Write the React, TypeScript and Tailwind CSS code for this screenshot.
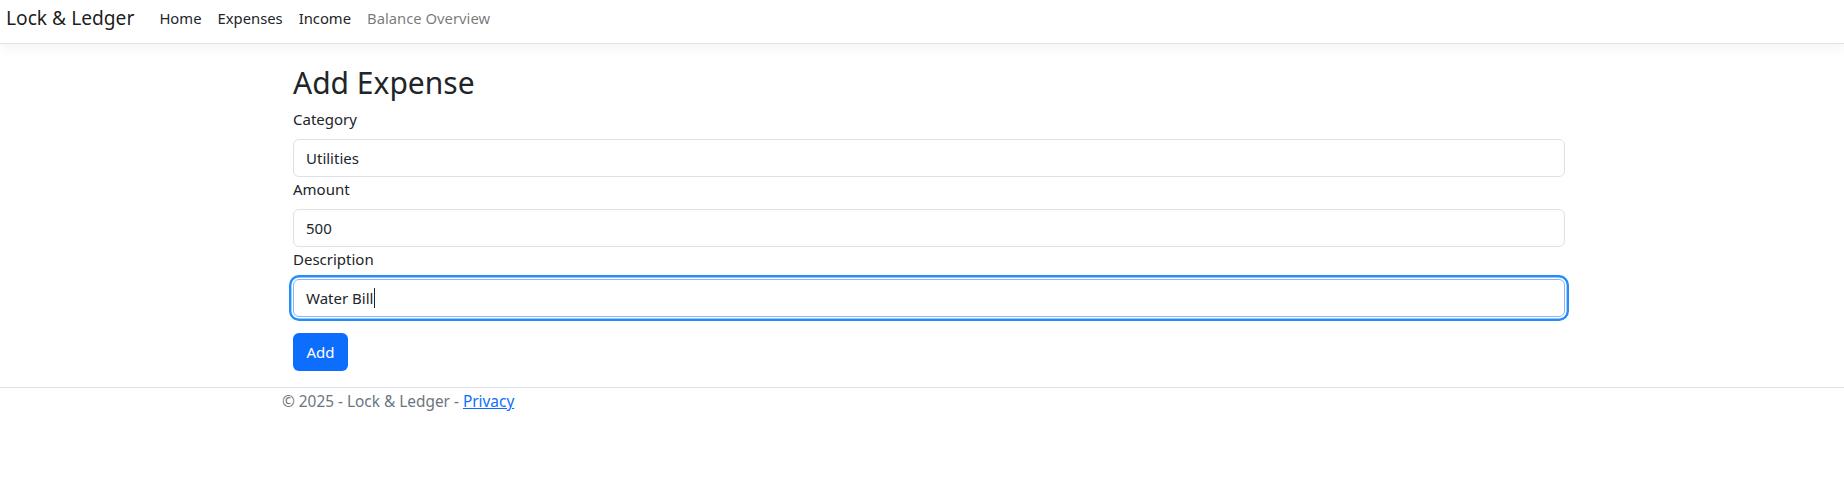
import React from "react";

const font = { fontFamily: '"Segoe UI", "Noto Sans", "Open Sans", Arial, sans-serif' };

function Field({ label, value, focused }: { label: string; value: string; focused?: boolean }) {
  return (
    <div>
      <div className="h-[24px] leading-[25px] mb-2 text-[15px] text-[#212529]">{label}</div>
      {focused ? (
        <div className="h-[38px] rounded-[6px] border border-[#86b7fe] bg-white px-3 flex items-center text-[15px] text-[#212529] shadow-[0_0_0_1.6px_#ffffff,0_0_0_4px_#258cfb]">
          <span>{value}</span>
          <span className="inline-block w-px h-[20px] bg-[#212529] ml-px" />
        </div>
      ) : (
        <input
          readOnly
          value={value}
          className="block w-full h-[38px] rounded-[6px] border border-[#dee2e6] bg-white px-3 text-[15px] text-[#212529] outline-none"
          style={font}
        />
      )}
    </div>
  );
}

export default function App() {
  return (
    <div className="min-h-[499px] bg-white text-[#212529]" style={font}>
      <nav className="h-[44px] border-b border-[#dee2e6] shadow-[0_4px_12px_rgba(0,0,0,0.05)] bg-white">
        <div className="h-[36px] flex items-center pl-[6px]">
          <span className="text-[19.2px] text-[rgba(0,0,0,0.9)] mr-[17px] leading-[30px]">Lock &amp; Ledger</span>
          <a className="px-2 text-[14.8px] text-[#212529]">Home</a>
          <a className="px-2 text-[14.8px] text-[#212529]">Expenses</a>
          <a className="px-2 text-[14.8px] text-[#212529]">Income</a>
          <a className="px-2 text-[14.8px] text-[rgba(0,0,0,0.55)]">Balance Overview</a>
        </div>
      </nav>
      <main className="ml-[293px] w-[1272px] pt-[20px]">
        <h2 className="h-[38px] leading-[38px] text-[30px] font-normal mb-[5px] text-[#212529]">Add Expense</h2>
        <Field label="Category" value="Utilities" />
        <Field label="Amount" value="500" />
        <Field label="Description" value="Water Bill" focused />
        <button className="mt-4 h-[38px] w-[55px] rounded-[6px] bg-[#0d6efd] text-white text-[15px]" style={font}>
          Add
        </button>
      </main>
      <footer className="mt-4 border-t border-[#dee2e6]">
        <div className="ml-[282px] h-[28px] leading-[28px] text-[15.4px] text-[#6c757d]">
          © 2025 - Lock &amp; Ledger - <a className="text-[#0d6efd] underline">Privacy</a>
        </div>
      </footer>
    </div>
  );
}
